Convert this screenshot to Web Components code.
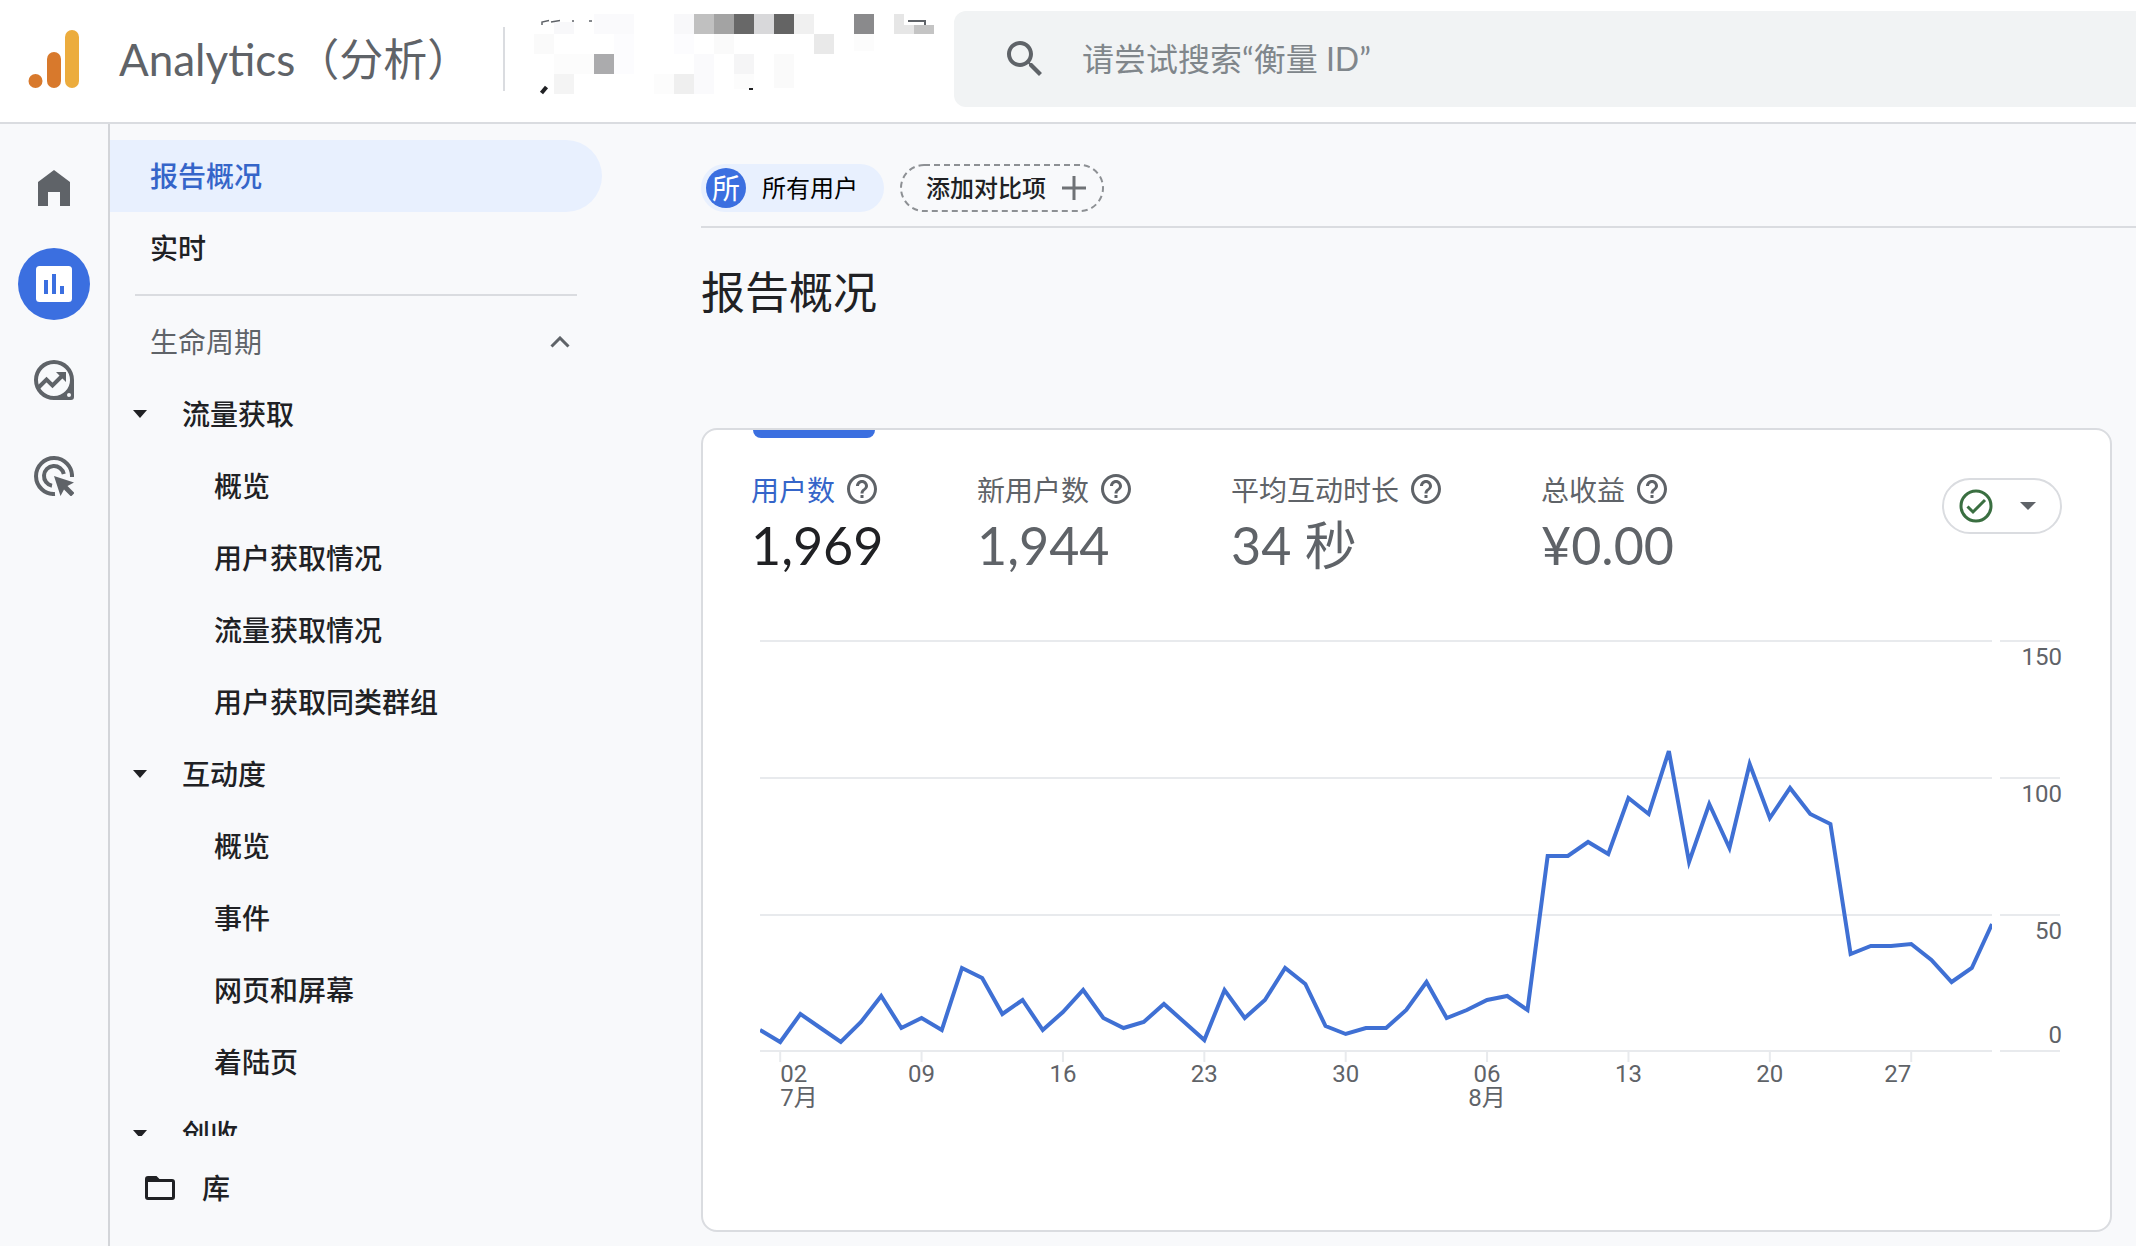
<!DOCTYPE html>
<html lang="zh-CN">
<head>
<meta charset="utf-8">
<meta name="viewport" content="width=device-width, initial-scale=1">
<title>Analytics（分析）</title>
<style>
  :root {
    --blue: #3b6fe0;
    --blue-text: #3565c9;
    --tint: #e8f0fe;
    --ink: #202124;
    --grey: #5f6368;
    --line: #dadce0;
    --page: #f8f9fb;
    --display: Lato, "Noto Sans CJK SC", sans-serif;
  }
  html, body { height: 100%; }
  body {
    margin: 0;
    background: var(--page);
    color: var(--ink);
    font: 28px/40px "Noto Sans CJK SC", sans-serif;
  }
</style>
</head>
<body>
<analytics-app>
  <app-header slot="header"></app-header>
  <icon-rail slot="rail"></icon-rail>
  <report-nav slot="nav">
    <nav-item current>报告概况</nav-item>
    <nav-item>实时</nav-item>
    <nav-section>生命周期</nav-section>
    <nav-item level="1">流量获取</nav-item>
    <nav-item level="2">概览</nav-item>
    <nav-item level="2">用户获取情况</nav-item>
    <nav-item level="2">流量获取情况</nav-item>
    <nav-item level="2">用户获取同类群组</nav-item>
    <nav-item level="1">互动度</nav-item>
    <nav-item level="2">概览</nav-item>
    <nav-item level="2">事件</nav-item>
    <nav-item level="2">网页和屏幕</nav-item>
    <nav-item level="2">着陆页</nav-item>
    <nav-item level="1">创收</nav-item>
    <nav-item slot="footer" level="library">库</nav-item>
  </report-nav>
  <comparison-bar></comparison-bar>
  <page-title>报告概况</page-title>
  <overview-card>
    <metric-tab slot="metrics" value="1,969" selected>用户数</metric-tab>
    <metric-tab slot="metrics" value="1,944">新用户数</metric-tab>
    <metric-tab slot="metrics" value="34 秒">平均互动时长</metric-tab>
    <metric-tab slot="metrics" value="¥0.00">总收益</metric-tab>
    <status-menu slot="status"></status-menu>
    <trend-chart></trend-chart>
  </overview-card>
</analytics-app>

<script>
const BASE = `
  :host, * { box-sizing: border-box; }
  svg { display: block; flex: none; }
  button { margin: 0; padding: 0; border: 0; background: none; color: inherit; font: inherit; text-align: left; cursor: pointer; }
  a { color: inherit; text-decoration: none; }
  .text { padding-bottom: 2px; }
`;

function define(name, render) {
  customElements.define(name, class extends HTMLElement {
    connectedCallback() {
      if (this.shadowRoot) return;
      const t = document.createElement('template');
      t.innerHTML = render(this);
      const s = this.attachShadow({ mode: 'open' });
      s.append(t.content.cloneNode(true));
    }
  });
}

define('analytics-app', () => `
  <style>${BASE}
    :host { display: flex; flex-direction: column; height: 100vh; overflow: hidden; }
    .body { display: flex; flex: 1; min-height: 0; }
    main { display: flex; flex-direction: column; flex: 1; min-width: 0; padding: 40px 0 14px 99px; }
  </style>
  <slot name="header"></slot>
  <div class="body">
    <slot name="rail"></slot>
    <slot name="nav"></slot>
    <main><slot></slot></main>
  </div>
`);

define('app-header', () => `
  <style>${BASE}
    :host { display: block; }
    header { display: flex; align-items: center; height: 124px; padding-bottom: 4px; background: #fff; border-bottom: 2px solid var(--line); }
    .brand { display: flex; align-items: center; gap: 39px; width: 503px; padding-left: 28px; color: var(--grey); font: 44px/60px var(--display); white-space: nowrap; }
    .account { width: 451px; height: 96px; border: 0; }
    .search { display: flex; align-items: center; flex: 1; gap: 33px; height: 96px; padding-left: 47px; background: #f1f3f4; border-radius: 12px 0 0 12px; }
    input { flex: 1; min-width: 0; border: 0; padding: 0; outline: 0; background: none; color: var(--ink); font: 32px/48px Lato, "Noto Sans CJK SC", sans-serif; }
    input::placeholder { color: #80868b; opacity: 1; }
  </style>
  <header>
    <a class="brand" href="#">
      <svg width="52" height="58" viewBox="0 0 52 58">
        <rect x="37" width="14" height="58" rx="7" fill="#ecac3d"/>
        <rect x="19" y="22" width="14" height="36" rx="7" fill="#d8792c"/>
        <circle cx="7.500" cy="51" r="7" fill="#d8792c"/>
      </svg>
      <span>Analytics（分析）</span>
    </a>
    <div class="account">
      <svg width="451" height="96" viewBox="3 11 451 96" aria-hidden="true">
        <rect x="3" y="27" width="2" height="64" fill="#dadce0"/>
        <g shape-rendering="crispEdges">
          <path fill="#fafafc" d="M94 14h40v20H94zM194 54h20v40h-20z"/>
          <path fill="#f8f8fa" d="M174 14h20v20h-20zM54 22h20v12H54z"/>
          <path fill="#c0c0c0" d="M194 14h20v20h-20z"/>
          <path fill="#a3a3a3" d="M214 14h20v20h-20z"/>
          <path fill="#686868" d="M234 14h20v20h-20z"/>
          <path fill="#d8d8da" d="M254 14h20v20h-20z"/>
          <path fill="#646464" d="M274 14h20v20h-20z"/>
          <path fill="#f0f0f0" d="M294 14h20v20h-20z"/>
          <path fill="#8a8a8c" d="M354 14h20v20h-20z"/>
          <path fill="#e6e6e6" d="M394 14h10v11h10v9h-20z"/>
          <path fill="#c4c4c4" d="M414 25h20v9h-20z"/>
          <path fill="#fafafa" d="M34 34h20v20H34zM274 54h20v34h-20zM214 34h20v20h-20z"/>
          <path fill="#fcfcfe" d="M114 34h20v40h-20zM174 34h20v20h-20z"/>
          <path fill="#fcfcfc" d="M54 54h40v20H54zM234 74h20v15h-20zM354 34h20v17h-20zM154 74h20v20h-20z"/>
          <path fill="#e9e9e9" d="M314 34h20v20h-20z"/>
          <path fill="#ababad" d="M94 54h20v20H94z"/>
          <path fill="#f5f5f6" d="M234 54h20v20h-20z"/>
          <path fill="#f4f4f4" d="M54 74h20v20H54z"/>
          <path fill="#efefef" d="M174 74h20v20h-20z"/>
        </g>
        <path fill="none" stroke="#5f6368" stroke-width="1.500" d="M42 25v-3l7-1.500M51 22l9-1.500M72 21h2M89 21h3"/>
        <path fill="none" stroke="#5f6368" stroke-width="2" d="M408 21h17v4"/>
        <path fill="none" stroke="#202124" stroke-width="4" d="M41.500 93l5-6"/>
        <path fill="#202124" d="M249 88h4v2h-4z"/>
      </svg>
    </div>
    <label class="search">
      <svg width="48" height="48" viewBox="0 0 24 24" fill="#5f6368"><path d="M15.500 14h-.79l-.28-.27C15.410 12.590 16 11.110 16 9.500 16 5.910 13.090 3 9.500 3S3 5.910 3 9.500 5.910 16 9.500 16c1.610 0 3.090-.59 4.230-1.570l.27.28v.79l5 4.990L20.490 19l-4.990-5zm-6 0C7.010 14 5 11.990 5 9.500S7.010 5 9.500 5 14 7.010 14 9.500 11.990 14 9.500 14z"/></svg>
      <input type="search" placeholder="请尝试搜索“衡量 ID”">
    </label>
  </header>
`);

define('icon-rail', () => `
  <style>${BASE}
    :host { display: block; flex: none; width: 110px; border-right: 2px solid #d3d5d9; }
    nav { display: flex; flex-direction: column; align-items: center; gap: 24px; padding-top: 28px; }
    a { display: flex; align-items: center; justify-content: center; width: 72px; height: 72px; border-radius: 50%; color: var(--grey); }
    a[aria-current] { background: var(--blue); color: #fff; }
  </style>
  <nav>
    <a href="#" aria-label="首页"><svg width="32" height="36" viewBox="0 0 32 36" fill="currentColor"><path d="M16 0l16 12v24H22V22H10v14H0V12z"/></svg></a>
    <a href="#" aria-label="报告" aria-current="page"><svg width="36" height="36" viewBox="0 0 36 36"><rect width="36" height="36" rx="3.500" fill="currentColor"/><path d="M8 14h4v14H8zM16 8h4v20h-4zM24 20h4v8h-4z" fill="#3b6fe0"/></svg></a>
    <a href="#" aria-label="探索"><svg width="40" height="40" viewBox="0 0 40 40"><path fill="currentColor" fill-rule="evenodd" d="M20 0a20 20 0 1 0 0 40h17a3 3 0 0 0 3-3V20A20 20 0 0 0 20 0zm0 4a16 16 0 1 1 0 32 16 16 0 0 1 0-32zm15 29a2 2 0 1 1 0 4 2 2 0 0 1 0-4zM22 12h10v10z"/><path d="M4 28l8.500-8.500 6 6L29 15" fill="none" stroke="currentColor" stroke-width="4"/></svg></a>
    <a href="#" aria-label="广告"><svg width="40" height="40" viewBox="0 0 40 40"><g fill="none" stroke="currentColor" stroke-width="4"><path d="M38 21A18 18 0 1 0 21 38"/><path d="M29.800 18A10 10 0 1 0 18 29.800"/></g><path fill="currentColor" d="M20 20l20 6.500-6.500 3.500 7 7-3.500 3.500-7-7L26.500 40z"/></svg></a>
  </nav>
`);

define('report-nav', () => `
  <style>${BASE}
    :host { display: flex; flex-direction: column; flex: none; width: 492px; padding-top: 16px; }
    nav { flex: 1; min-height: 0; overflow: hidden; }
    .foot { padding: 16px 0 22px; }
  </style>
  <nav><slot></slot></nav>
  <div class="foot"><slot name="footer"></slot></div>
`);

define('nav-item', el => {
  const level = el.getAttribute('level') || '0';
  const caret = '<svg width="14" height="8" viewBox="0 0 14 8"><path d="M0 0h14L7 8z" fill="currentColor"/></svg>';
  const folder = '<svg width="30" height="24" viewBox="0 0 30 24"><path fill="currentColor" fill-rule="evenodd" d="M3 0h8.500l3 3H27a3 3 0 0 1 3 3v15a3 3 0 0 1-3 3H3a3 3 0 0 1-3-3V3a3 3 0 0 1 3-3zm0 6v15h24V6z"/></svg>';
  const lead = level === '1' ? caret : level === 'library' ? folder : '';
  return `
  <style>${BASE}
    :host { display: block; }
    a { display: flex; align-items: center; height: 72px; padding-left: 40px; border-radius: 0 36px 36px 0; font-weight: 500; white-space: nowrap; }
    a[aria-current] { background: var(--tint); color: var(--blue-text); }
    .l1 { padding-left: 23px; gap: 35px; }
    .l2 { padding-left: 104px; }
    .llibrary { padding-left: 35px; gap: 27px; }
  </style>
  <a href="#" class="l${level}" ${el.hasAttribute('current') ? 'aria-current="page"' : ''}>${lead}<span class="text"><slot></slot></span></a>`;
});

define('nav-section', () => `
  <style>${BASE}
    :host { display: block; margin: 10px 25px 0; border-top: 2px solid var(--line); padding-top: 10px; }
    button { display: flex; align-items: center; justify-content: space-between; width: 100%; height: 72px; padding: 0 7px 0 15px; color: var(--grey); }
  </style>
  <button aria-expanded="true"><span class="text"><slot></slot></span><svg width="20" height="12" viewBox="0 0 20 12"><path d="M1.500 10.500L10 2l8.500 8.500" fill="none" stroke="#5f6368" stroke-width="3"/></svg></button>
`);

define('comparison-bar', () => `
  <style>${BASE}
    :host { display: flex; gap: 16px; padding-bottom: 14px; border-bottom: 2px solid var(--line); font-size: 24px; line-height: 36px; }
    button { display: flex; align-items: center; height: 48px; border-radius: 24px; white-space: nowrap; }
    .all { gap: 16px; padding: 0 26px 0 5px; background: var(--tint); color: #000; }
    .badge { display: flex; align-items: center; justify-content: center; width: 40px; height: 40px; padding-bottom: 2px; border-radius: 50%; background: var(--blue); color: #fff; font-size: 28px; }
    .add { position: relative; gap: 16px; padding: 0 18px 0 26px; font-weight: 500; }
    .ring { position: absolute; inset: 0; width: 100%; height: 100%; }
  </style>
  <button class="all"><span class="badge">所</span><span class="text">所有用户</span></button>
  <button class="add"><svg class="ring"><rect x="1" y="1" style="width:calc(100% - 2px);height:calc(100% - 2px)" rx="23" fill="none" stroke="#8d9094" stroke-width="2" stroke-dasharray="6 4"/></svg><span class="text">添加对比项</span><svg width="24" height="24" viewBox="0 0 24 24"><path d="M12 0v24M0 12h24" stroke="#6f7276" stroke-width="3"/></svg></button>
`);

define('page-title', () => `
  <style>
    :host { display: block; margin: 30px 0 106px; }
    h1 { margin: 0; font: 44px/64px "Noto Sans CJK SC", sans-serif; }
  </style>
  <h1><slot></slot></h1>
`);

define('overview-card', () => `
  <style>${BASE}
    :host { display: block; flex: 1; margin-right: 24px; padding: 0 48px; background: #fff; border: 2px solid var(--line); border-radius: 16px; }
    .top { display: flex; align-items: flex-start; justify-content: space-between; }
    .metrics { display: flex; gap: 100px; }
  </style>
  <div class="top"><div class="metrics"><slot name="metrics"></slot></div><slot name="status"></slot></div>
  <slot></slot>
`);

define('metric-tab', el => `
  <style>${BASE}
    :host { display: block; color: var(--grey); }
    .tab { display: flex; flex-direction: column; height: 210px; }
    .bar { display: block; height: 8px; margin: 0 2px 31px; border-radius: 0 0 8px 8px; }
    .label { display: flex; align-items: center; gap: 12px; white-space: nowrap; }
    .value { display: block; contain: inline-size; white-space: nowrap; font: 52px/72px var(--display); }
    :host([selected]) .bar { background: var(--blue); }
    :host([selected]) .name { color: var(--blue-text); }
    :host([selected]) .value { color: var(--ink); }
  </style>
  <button class="tab">
    <span class="bar"></span>
    <span class="label"><span class="name"><slot></slot></span><svg width="30" height="30" viewBox="2 2 20 20" fill="#5f6368"><path d="M11 18h2v-2h-2v2zm1-16C6.480 2 2 6.480 2 12s4.480 10 10 10 10-4.480 10-10S17.520 2 12 2zm0 18c-4.410 0-8-3.590-8-8s3.590-8 8-8 8 3.590 8 8-3.590 8-8 8zm0-14c-2.210 0-4 1.790-4 4h2c0-1.100.9-2 2-2s2 .9 2 2c0 2-3 1.750-3 5h2c0-2.250 3-2.500 3-5 0-2.210-1.790-4-4-4z"/></svg></span>
    <span class="value">${el.getAttribute('value')}</span>
  </button>
`);

define('status-menu', () => `
  <style>${BASE}
    :host { display: block; margin-top: 48px; }
    button { display: flex; align-items: center; justify-content: space-between; width: 120px; height: 56px; padding: 0 24px 0 15px; border: 2px solid var(--line); border-radius: 28px; }
  </style>
  <button aria-label="数据质量" aria-haspopup="menu">
    <svg width="34" height="34" viewBox="0 0 34 34" fill="none" stroke="#3a6f41" stroke-width="3"><circle cx="17" cy="17" r="15"/><path d="M8.500 17.500l5.500 5.500L26 11"/></svg>
    <svg width="16" height="8" viewBox="0 0 16 8"><path d="M0 0h16L8 8z" fill="#5f6368"/></svg>
  </button>
`);

define('trend-chart', () => {
  /* Daily points as heights above the zero line; 410 is the 150-user grid line. */
  const days = [21,9,37,23,9,29,55,23,33,21,83,73,37,51,21,39,61,33,23,29,47,29,11,61,33,51,83,67,25,17,23,
    23,41,69,33,41,51,55,41,195,195,209,197,253,237,300,189,247,203,287,233,263,237,227,97,105,105,107,91,69,83,127];
  const grid = [1, 138, 275, 411];
  const last = days.length - 1;
  const pts = days.map((h, i) => `${i * 20},${411 - h}`).join(' ');
  const ticks = [['02', 1, 'start', '7月'], ['09', 8], ['16', 15], ['23', 22], ['30', 29], ['06', 36, 'middle', '8月'], ['13', 43], ['20', 50], ['27', 57, 'end']];
  return `
  <style>${BASE}
    :host { display: flex; gap: 8px; padding-left: 9px; font: 24px/24px Roboto, "Noto Sans CJK SC", sans-serif; }
    .plot { flex: 1; min-width: 0; height: 476px; overflow: visible; }
    .axis { width: 62px; height: 476px; }
    .grid { stroke: #e8eaed; stroke-width: 2; }
    text { fill: var(--grey); }
    .series { fill: none; stroke: #3f70d4; stroke-width: 4; vector-effect: non-scaling-stroke; }
  </style>
  <svg class="plot">
    ${grid.map(y => `<line class="grid" x1="0" x2="100%" y1="${y}" y2="${y}"/>`).join('')}
    ${ticks.map(([t, d, a = 'middle', m]) => { const x = d / last * 100 + '%'; return `<line class="grid" x1="${x}" x2="${x}" y1="412" y2="422"/><text x="${x}" y="442" text-anchor="${a}">${t}</text>` + (m ? `<text x="${x}" y="466" text-anchor="${a}">${m}</text>` : ''); }).join('')}
    <svg width="100%" height="412" viewBox="0 0 ${last * 20} 412" preserveAspectRatio="none"><polyline class="series" points="${pts}"/></svg>
  </svg>
  <svg class="axis">
    ${grid.map((y, i) => `<line class="grid" x1="0" x2="60" y1="${y}" y2="${y}"/><text x="62" y="${i === 3 ? 403 : y + 24}" text-anchor="end">${150 - i * 50}</text>`).join('')}
  </svg>`;
});
</script>
</body>
</html>
